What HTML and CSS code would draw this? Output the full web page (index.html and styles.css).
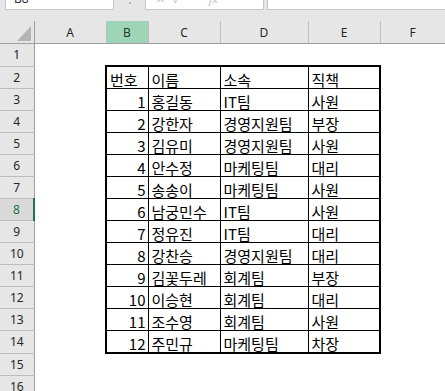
FILE: index.html
```html
<!DOCTYPE html>
<html lang="ko">
<head>
<meta charset="utf-8">
<link rel="stylesheet" href="styles.css">
</head>
<body>
<div class="fbar">
  <div class="namebox">B8</div>
  <div class="dots">⋮</div>
  <div class="fxbox"><span>✕</span><span>✓</span><span class="fx">fx</span></div>
  <div class="formula"></div>
</div>
<table class="sheet">
  <colgroup>
    <col class="w-rh"><col class="w-a"><col class="w-b"><col class="w-c"><col class="w-d"><col class="w-e"><col class="w-f">
  </colgroup>
  <thead>
    <tr>
      <th class="corner"><svg class="tri" width="14" height="15" viewBox="0 0 14 15"><polygon points="14,0 14,15 0,15" fill="#b4b4b4"/></svg></th>
      <th>A</th><th class="sel">B</th><th>C</th><th>D</th><th>E</th><th>F</th>
    </tr>
  </thead>
  <tbody>
    <tr><th>1</th><td></td><td></td><td></td><td></td><td></td><td></td></tr>
    <tr><th>2</th><td></td><td class="t l tp">번호</td><td class="t tp">이름</td><td class="t tp">소속</td><td class="t r tp">직책</td><td></td></tr>
    <tr><th>3</th><td></td><td class="t l n">1</td><td class="t">홍길동</td><td class="t">IT팀</td><td class="t r">사원</td><td></td></tr>
    <tr><th>4</th><td></td><td class="t l n">2</td><td class="t">강한자</td><td class="t">경영지원팀</td><td class="t r">부장</td><td></td></tr>
    <tr><th>5</th><td></td><td class="t l n">3</td><td class="t">김유미</td><td class="t">경영지원팀</td><td class="t r">사원</td><td></td></tr>
    <tr><th>6</th><td></td><td class="t l n">4</td><td class="t">안수정</td><td class="t">마케팅팀</td><td class="t r">대리</td><td></td></tr>
    <tr><th>7</th><td></td><td class="t l n">5</td><td class="t">송송이</td><td class="t">마케팅팀</td><td class="t r">사원</td><td></td></tr>
    <tr><th class="active">8</th><td></td><td class="t l n">6</td><td class="t">남궁민수</td><td class="t">IT팀</td><td class="t r">사원</td><td></td></tr>
    <tr><th>9</th><td></td><td class="t l n">7</td><td class="t">정유진</td><td class="t">IT팀</td><td class="t r">대리</td><td></td></tr>
    <tr><th>10</th><td></td><td class="t l n">8</td><td class="t">강찬승</td><td class="t">경영지원팀</td><td class="t r">대리</td><td></td></tr>
    <tr><th>11</th><td></td><td class="t l n">9</td><td class="t">김꽃두레</td><td class="t">회계팀</td><td class="t r">부장</td><td></td></tr>
    <tr><th>12</th><td></td><td class="t l n">10</td><td class="t">이승현</td><td class="t">회계팀</td><td class="t r">대리</td><td></td></tr>
    <tr><th>13</th><td></td><td class="t l n">11</td><td class="t">조수영</td><td class="t">회계팀</td><td class="t r">사원</td><td></td></tr>
    <tr><th>14</th><td></td><td class="t l n bt">12</td><td class="t bt">주민규</td><td class="t bt">마케팅팀</td><td class="t r bt">차장</td><td></td></tr>
    <tr><th>15</th><td></td><td></td><td></td><td></td><td></td><td></td></tr>
    <tr><th>16</th><td></td><td></td><td></td><td></td><td></td><td></td></tr>
  </tbody>
</table>
</body>
</html>
```

FILE: styles.css
```css
html, body {
  margin: 0;
  padding: 0;
  background: #ffffff;
  overflow: hidden;
}
body {
  width: 445px;
  height: 391px;
}
.fbar {
  display: flex;
  height: 21px;
  overflow: hidden;
  background: #e6e6e6;
  font-family: "Noto Sans", "Open Sans", sans-serif;
  font-size: 12px;
  color: #333;
}
.namebox {
  margin-left: 5px;
  margin-top: -21px;
  width: 99px;
  height: 29px;
  background: #fff;
  border: 1px solid #c6c6c6;
  padding-left: 8px;
  box-sizing: content-box;
  line-height: 38px;
}
.dots {
  width: 31px;
  margin-top: -21px;
  height: 30px;
  line-height: 38px;
  text-align: center;
  color: #9a9a9a;
}
.fxbox {
  margin-top: -21px;
  width: 107px;
  height: 29px;
  background: #fff;
  border: 1px solid #c6c6c6;
  display: flex;
  gap: 8px;
  padding-left: 10px;
  box-sizing: content-box;
  line-height: 38px;
  color: #c4c4c4;
  font-size: 11px;
}
.fxbox .fx {
  margin-left: 20px;
  font-style: italic;
}
.formula {
  margin-top: -21px;
  margin-left: 3px;
  flex: 1;
  height: 29px;
  background: #fff;
  border: 1px solid #c6c6c6;
  border-right: none;
}
.sheet {
  border-collapse: collapse;
  table-layout: fixed;
  width: 445px;
}
.w-rh { width: 34px; }
.w-a { width: 72px; }
.w-b { width: 42px; }
.w-c { width: 72px; }
.w-d { width: 88px; }
.w-e { width: 72px; }
.w-f { width: 65px; }
.sheet th {
  background: #e6e6e6;
  font-family: "Noto Sans", "Open Sans", sans-serif;
  font-weight: normal;
  font-size: 12px;
  color: #262626;
  text-align: center;
  padding: 0;
}
.sheet thead th {
  height: 21px;
  border-right: 1px solid #c0c0c0;
  border-bottom: 1px solid #9f9f9f;
  line-height: 21px;
  padding-top: 1px;
}
.sheet thead th.sel {
  background: #9fd5b7;
  color: #1e3b2b;
}
.sheet thead th.corner {
  border-right: 1px solid #9f9f9f;
  position: relative;
  padding: 0;
}
.tri {
  position: absolute;
  right: 3px;
  bottom: 2px;
}
.sheet tbody th {
  height: 21px;
  border-right: 1px solid #9f9f9f;
  border-bottom: 1px solid #bdbdbd;
  line-height: 21px;
}
.sheet tbody th.active {
  border-right: 2px solid #217346;
  color: #217346;
  background: #d9d9d9;
}
.sheet td {
  height: 21px;
  padding: 0 2px 0 3px;
  border: none;
  white-space: nowrap;
  overflow: hidden;
  vertical-align: bottom;
  font-family: "Noto Sans CJK KR", "Noto Sans", sans-serif;
  font-size: 15px;
  line-height: 17px;
  color: #000;
}
.sheet td.t {
  border: 1px solid #000;
}
.sheet td.l { border-left: 2px solid #000; }
.sheet td.r { border-right: 2px solid #000; }
.sheet td.tp { border-top: 2px solid #000; }
.sheet td.bt { border-bottom: 2px solid #000; }
.sheet td.n {
  text-align: right;
  padding-right: 2px;
}
```
